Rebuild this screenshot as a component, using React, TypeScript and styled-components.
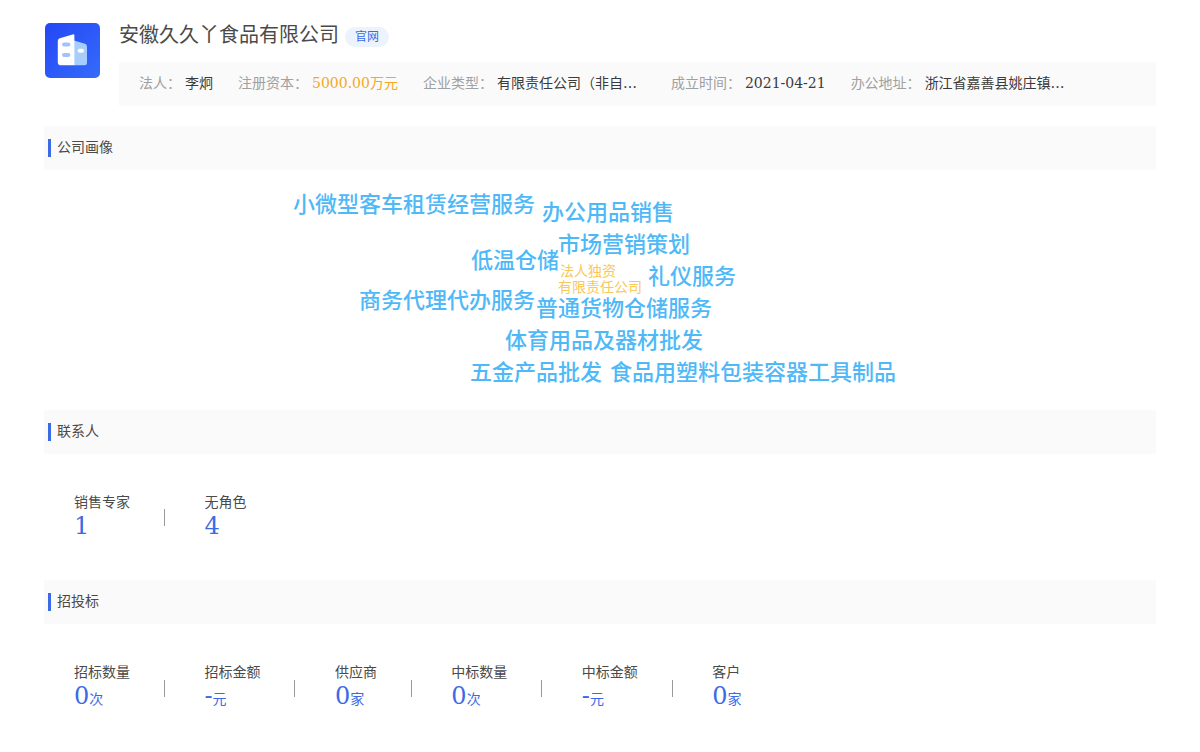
import React from 'react';
import styled, { createGlobalStyle } from 'styled-components';

const GlobalStyle = createGlobalStyle`
  * { box-sizing: border-box; }
  body {
    margin: 0;
    background: #fff;
    color: #4a4a4a;
    font-family: "DejaVu Serif", "Noto Sans CJK SC", serif;
    font-size: 14px;
    line-height: 20px;
  }
`;

const Page = styled.main`
  padding: 22px 44px 32px;
`;

const Header = styled.header`
  display: flex;
  gap: 18px;
  margin-bottom: 20px;
`;

const Logo = styled.svg`
  flex: none;
  width: 57px;
  height: 57px;
`;

const HeaderBody = styled.div`
  flex: 1;
  min-width: 0;
`;

const TitleRow = styled.div`
  display: flex;
  align-items: center;
  gap: 6px;
  height: 40px;
  padding-bottom: 14px;
`;

const Title = styled.h1`
  margin: 0;
  font-size: 20px;
  line-height: 24px;
  font-weight: 400;
`;

const SiteLink = styled.a`
  height: 20px;
  margin-top: 4px;
  padding: 0 10px;
  border-radius: 10px;
  background: #ecf3fd;
  color: #3a6ae6;
  font-size: 12px;
  line-height: 20px;
  text-decoration: none;
`;

const InfoBar = styled.dl`
  display: flex;
  flex-wrap: wrap;
  column-gap: 25px;
  margin: 0;
  padding: 10px 20px 12px;
  background: #fafafa;
  line-height: 22px;
`;

const InfoItem = styled.div`
  display: flex;
  gap: 4px;
`;

const InfoLabel = styled.dt`
  color: #a0a0a0;
`;

const InfoValue = styled.dd<{ $accent?: boolean; $wide?: boolean }>`
  margin: 0;
  min-width: ${(p) => (p.$wide ? '149px' : '0')};
  color: ${(p) => (p.$accent ? '#f5a623' : '#3a3a3a')};
`;

const SectionTitle = styled.h2`
  display: flex;
  align-items: center;
  gap: 6px;
  height: 44px;
  margin: 0;
  padding: 0 4px;
  background: #fafafa;
  font-size: 14px;
  font-weight: 400;
  line-height: 20px;

  &::before {
    content: "";
    width: 3px;
    height: 18px;
    background: #3a6ae6;
  }
`;

const SectionName = styled.span`
  padding-bottom: 2px;
`;

const CloudArea = styled.div`
  display: flex;
  justify-content: center;
  height: 240px;
`;

const Cloud = styled.div`
  position: relative;
  width: 640px;
`;

const Word = styled.span<{ $x: number; $y: number; $small?: boolean }>`
  position: absolute;
  left: ${(p) => p.$x}px;
  top: ${(p) => p.$y}px;
  color: ${(p) => (p.$small ? '#fac858' : '#4fb9f7')};
  font-family: "Noto Sans CJK SC", sans-serif;
  font-size: ${(p) => (p.$small ? '14px' : '22px')};
  font-weight: ${(p) => (p.$small ? 400 : 500)};
  line-height: ${(p) => (p.$small ? '16px' : '24px')};
  white-space: nowrap;
`;

const Stats = styled.div`
  height: 126px;
  padding: 38px 30px 0;
`;

const Stat = styled.div`
  display: inline-flex;
  align-items: center;
  gap: 34px;
  margin-right: 35px;

  &:not(:last-child)::after {
    content: "";
    width: 1px;
    height: 17px;
    margin-top: 2px;
    background: #999;
  }
`;

const StatLabel = styled.div`
  line-height: 20px;
`;

const StatValue = styled.div`
  color: #3a6ae6;
  font-size: 24px;
  line-height: 28px;
`;

const Unit = styled.span`
  font-size: 14px;
`;

const info = [
  { label: '法人：', value: '李炯' },
  { label: '注册资本：', value: '5000.00万元', accent: true },
  { label: '企业类型：', value: '有限责任公司（非自…', wide: true },
  { label: '成立时间：', value: '2021-04-21' },
  { label: '办公地址：', value: '浙江省嘉善县姚庄镇…', wide: true },
];

const words = [
  { text: '小微型客车租赁经营服务', x: 13, y: 20 },
  { text: '办公用品销售', x: 262, y: 28 },
  { text: '市场营销策划', x: 278, y: 60 },
  { text: '低温仓储', x: 191, y: 76 },
  { text: '法人独资', x: 280, y: 92, small: true },
  { text: '有限责任公司', x: 278, y: 108, small: true },
  { text: '礼仪服务', x: 368, y: 92 },
  { text: '商务代理代办服务', x: 79, y: 116 },
  { text: '普通货物仓储服务', x: 256, y: 124 },
  { text: '体育用品及器材批发', x: 225, y: 156 },
  { text: '五金产品批发', x: 190, y: 188 },
  { text: '食品用塑料包装容器工具制品', x: 330, y: 188 },
];

type StatData = { label: string; value: string; unit?: string };

const contacts: StatData[] = [
  { label: '销售专家', value: '1' },
  { label: '无角色', value: '4' },
];

const bids: StatData[] = [
  { label: '招标数量', value: '0', unit: '次' },
  { label: '招标金额', value: '-', unit: '元' },
  { label: '供应商', value: '0', unit: '家' },
  { label: '中标数量', value: '0', unit: '次' },
  { label: '中标金额', value: '-', unit: '元' },
  { label: '客户', value: '0', unit: '家' },
];

function SectionHeading({ name }: { name: string }) {
  return (
    <SectionTitle>
      <SectionName>{name}</SectionName>
    </SectionTitle>
  );
}

function StatList({ items }: { items: StatData[] }) {
  return (
    <Stats>
      {items.map((item) => (
        <React.Fragment key={item.label}>
          <Stat>
            <div>
              <StatLabel>{item.label}</StatLabel>
              <StatValue>
                {item.value}
                {item.unit && <Unit>{item.unit}</Unit>}
              </StatValue>
            </div>
          </Stat>{' '}
        </React.Fragment>
      ))}
    </Stats>
  );
}

function CompanyLogo() {
  return (
    <Logo viewBox="0 0 57 57" aria-hidden="true">
      <defs>
        <linearGradient id="logo-bg" x1="0" y1="0" x2="1" y2="1">
          <stop offset="0" stopColor="#2447f5" />
          <stop offset="1" stopColor="#356bfb" />
        </linearGradient>
      </defs>
      <rect x="1" y="1" width="55" height="55" rx="5" fill="url(#logo-bg)" />
      <path d="M30 18.5 41 21.8Q43 22.4 43 24.4V41Q43 43.3 40.7 43.3H30Z" fill="#a6cdfb" />
      <path d="M30.4 13.4V43.3H17Q13.8 43.3 13.8 40.2V18.8Q13.8 16.8 15.8 16.3L28.6 12.4Q30.4 11.9 30.4 13.4Z" fill="#fff" />
      <rect x="18" y="20.5" width="8.4" height="4" rx="2" fill="#a3c3f8" />
      <rect x="18" y="31" width="8.4" height="4" rx="2" fill="#a3c3f8" />
      <rect x="33.6" y="26.8" width="6.4" height="4" rx="2" fill="#fff" />
    </Logo>
  );
}

export default function App() {
  return (
    <>
      <GlobalStyle />
      <Page>
        <Header>
          <CompanyLogo />
          <HeaderBody>
            <TitleRow>
              <Title>安徽久久丫食品有限公司</Title>
              <SiteLink href="#">官网</SiteLink>
            </TitleRow>
            <InfoBar>
              {info.map((item) => (
                <InfoItem key={item.label}>
                  <InfoLabel>{item.label}</InfoLabel>
                  <InfoValue $accent={item.accent} $wide={item.wide}>
                    {item.value}
                  </InfoValue>
                </InfoItem>
              ))}
            </InfoBar>
          </HeaderBody>
        </Header>

        <section>
          <SectionHeading name="公司画像" />
          <CloudArea>
            <Cloud>
              {words.map((w) => (
                <Word key={w.text} $x={w.x} $y={w.y} $small={w.small}>
                  {w.text}
                </Word>
              ))}
            </Cloud>
          </CloudArea>
        </section>

        <section>
          <SectionHeading name="联系人" />
          <StatList items={contacts} />
        </section>

        <section>
          <SectionHeading name="招投标" />
          <StatList items={bids} />
        </section>
      </Page>
    </>
  );
}
